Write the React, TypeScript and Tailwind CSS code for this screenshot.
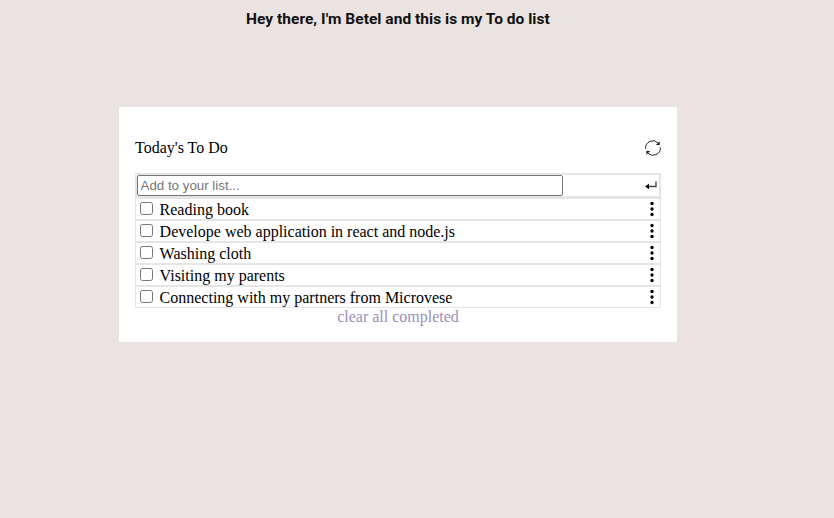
const items = [
  'Reading book',
  'Develope web application in react and node.js',
  'Washing cloth',
  'Visiting my parents',
  'Connecting with my partners from Microvese',
];

function RefreshIcon() {
  return (
    <svg width="16" height="16" viewBox="0 0 16 16" fill="none" stroke="#222" strokeWidth="1">
      <path d="M0.6 8.6A7.4 7.4 0 0 1 13.4 3.1" />
      <path d="M15.4 7.4A7.4 7.4 0 0 1 2.6 12.9" />
      <path d="M14.6 1.2V5H10.8L12.6 3.6Z" fill="#111" stroke="none" />
      <path d="M1.4 14.8V11H5.2L3.4 12.4Z" fill="#111" stroke="none" />
    </svg>
  );
}

function EnterIcon() {
  return (
    <svg width="12" height="10" viewBox="0 0 12 10" fill="none">
      <path d="M2 5.5H11V0.5" stroke="#444" strokeWidth="1.4" />
      <path d="M0 5.5L4 2.8V8.2Z" fill="#000" />
    </svg>
  );
}

function DotsIcon() {
  return (
    <svg width="4" height="16" viewBox="0 0 4 16" fill="#000">
      <circle cx="2" cy="2.5" r="1.65" />
      <circle cx="2" cy="8" r="1.65" />
      <circle cx="2" cy="13.5" r="1.65" />
    </svg>
  );
}

export default function App() {
  return (
    <div className="h-[518px] w-[834px] overflow-hidden bg-[#ebe3e1] font-['Liberation_Serif',serif] text-base leading-[18px] text-black">
      <h1 className="ml-[246px] h-[107px] whitespace-nowrap pt-2.5 font-['Roboto',sans-serif] text-[15.5px] leading-[18px] font-bold tracking-[0.03px] text-[#111]">
        Hey there, I'm Betel and this is my To do list
      </h1>
      <main className="ml-[119px] h-[235px] w-[558px] bg-white px-4 pt-8">
        <div className="flex h-[34px] items-start justify-between">
          <h2 className="leading-[18px]">Today's To Do</h2>
          <button className="mt-px" aria-label="Refresh">
            <RefreshIcon />
          </button>
        </div>
        <form className="flex h-[25px] items-center justify-between border-2 border-[#e5e5e5] pr-0.5">
          <input
            className="h-[21px] w-[426px] rounded-[2px] border border-[#767676] bg-white px-[2.5px] font-['Liberation_Sans',sans-serif] text-[13.333px] leading-[15px] outline-none placeholder:text-[#757575]"
            placeholder="Add to your list..."
          />
          <button type="button" aria-label="Add">
            <EnterIcon />
          </button>
        </form>
        <ul>
          {items.map((item) => (
            <li key={item} className="flex h-[22px] items-start border border-[#e5e5e5] pr-1.5">
              <input type="checkbox" className="ml-1 mt-[3px] h-[13px] w-[13px]" />
              <span className="ml-[6.6px] mt-[2px] grow">{item}</span>
              <button className="mt-0.5" aria-label="Options">
                <DotsIcon />
              </button>
            </li>
          ))}
        </ul>
        <button className="block w-full text-center text-[#9a8fb8]">clear all completed</button>
      </main>
    </div>
  );
}
